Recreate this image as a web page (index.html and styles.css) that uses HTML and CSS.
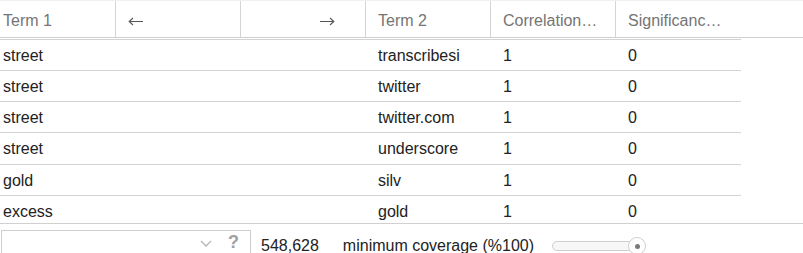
FILE: index.html
```html
<!DOCTYPE html>
<html>
<head>
<meta charset="utf-8">
<link rel="stylesheet" href="styles.css">
</head>
<body>
<div class="grid-wrap">
  <div class="head">
    <div class="hcell first">Term 1</div>
    <div class="hcell arrow"><svg width="15" height="9" viewBox="0 0 15 9"><path d="M15 4.5H1M5 1L1.2 4.5L5 8" fill="none" stroke="#555" stroke-width="1.1"/></svg></div>
    <div class="hcell arrow right"><svg width="15" height="9" viewBox="0 0 15 9"><path d="M0 4.5H14M10 1L13.8 4.5L10 8" fill="none" stroke="#555" stroke-width="1.1"/></svg></div>
    <div class="hcell">Term 2</div>
    <div class="hcell">Correlation…</div>
    <div class="hcell">Significanc…</div>
    <div class="hfill"></div>
  </div>
  <div class="body">
    <div class="row"><div class="cell first">street</div><div class="cell"></div><div class="cell"></div><div class="cell">transcribesi</div><div class="cell">1</div><div class="cell">0</div></div>
    <div class="row"><div class="cell first">street</div><div class="cell"></div><div class="cell"></div><div class="cell">twitter</div><div class="cell">1</div><div class="cell">0</div></div>
    <div class="row"><div class="cell first">street</div><div class="cell"></div><div class="cell"></div><div class="cell">twitter.com</div><div class="cell">1</div><div class="cell">0</div></div>
    <div class="row"><div class="cell first">street</div><div class="cell"></div><div class="cell"></div><div class="cell">underscore</div><div class="cell">1</div><div class="cell">0</div></div>
    <div class="row"><div class="cell first">gold</div><div class="cell"></div><div class="cell"></div><div class="cell">silv</div><div class="cell">1</div><div class="cell">0</div></div>
    <div class="row"><div class="cell first">excess</div><div class="cell"></div><div class="cell"></div><div class="cell">gold</div><div class="cell">1</div><div class="cell">0</div></div>
  </div>
</div>
<div class="controls">
  <div class="select">
    <svg class="chev" width="12" height="8" viewBox="0 0 12 8"><polyline points="1,1 6,6 11,1" fill="none" stroke="#b5b5b5" stroke-width="1.3"/></svg>
    <span class="help">?</span>
  </div>
  <span class="count">548,628</span>
  <span class="label">minimum coverage (%100)</span>
  <div class="slider">
    <div class="thumb"><div class="dot"></div></div>
  </div>
</div>
</body>
</html>
```
FILE: styles.css
```css
html, body {
  margin: 0;
  padding: 0;
  background: #fff;
}
body {
  width: 803px;
  height: 253px;
  overflow: hidden;
  font-family: "Liberation Sans", Arial, sans-serif;
  font-size: 16px;
  color: #222;
}
.head {
  display: grid;
  grid-template-columns: 115px 125px 125px 125px 125px 125px 1fr;
  border-top: 1px solid #f0f0f0;
  border-bottom: 1px solid #d0d0d0;
  height: 36px;
}
.hcell {
  border-left: 1px solid #d4d4d4;
  padding: 5px 0 2px 12px;
  line-height: 29px;
  color: #757575;
  white-space: nowrap;
  overflow: hidden;
}
.hcell.first {
  border-left: none;
  padding-left: 3px;
}
.hcell.arrow {
  display: flex;
  align-items: center;
  padding-top: 6px;
  padding-bottom: 1px;
}
.hcell.right {
  justify-content: flex-end;
  padding-right: 30px;
}
.body {
  margin-top: 1px;
  height: 184px;
  overflow: hidden;
  border-bottom: 1px solid #d0d0d0;
}
.row {
  display: grid;
  grid-template-columns: 115px 125px 125px 125px 125px 126px;
  width: 741px;
  height: 31.15px;
  box-sizing: border-box;
  border-top: 1px solid #d3d3d3;
}
.cell {
  padding: 2px 0 0 13px;
  line-height: 28px;
  white-space: nowrap;
}
.cell.first {
  padding-left: 3px;
}
.controls {
  display: flex;
  align-items: flex-start;
  padding-top: 6px;
}
.select {
  margin-left: 1px;
  width: 250px;
  height: 30px;
  box-sizing: border-box;
  border: 1px solid #cfcfcf;
  display: flex;
  align-items: flex-start;
  justify-content: flex-end;
  padding-right: 11px;
}
.chev {
  margin-top: 9px;
  margin-right: 16px;
}
.help {
  font-weight: bold;
  font-size: 18px;
  line-height: 20px;
  color: #a0a0a0;
  margin-top: 1px;
}
.count {
  margin-left: 10px;
  margin-top: 6px;
  line-height: 20px;
}
.label {
  margin-left: 24px;
  margin-top: 6px;
  line-height: 20px;
}
.slider {
  position: relative;
  margin-left: 18px;
  margin-top: 11px;
  width: 93px;
  height: 10px;
  box-sizing: border-box;
  border: 1px solid #cfcfcf;
  border-radius: 5px;
  background: #f7f7f7;
}
.thumb {
  position: absolute;
  right: -2px;
  top: -5px;
  width: 18px;
  height: 18px;
  box-sizing: border-box;
  border: 1px solid #cfcfcf;
  border-radius: 50%;
  background: #fff;
  display: flex;
  align-items: center;
  justify-content: center;
}
.dot {
  width: 5px;
  height: 5px;
  border-radius: 50%;
  background: #7a7a7a;
}
```
